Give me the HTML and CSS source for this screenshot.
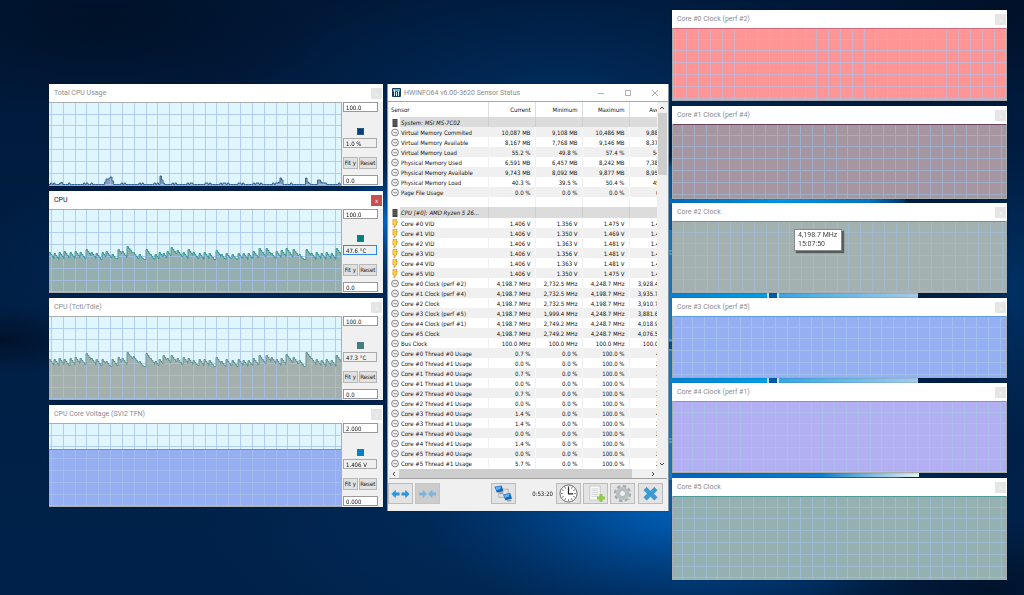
FILE: index.html
```html
<!DOCTYPE html>
<html lang="en">
<head>
<meta charset="utf-8">
<title>Sensor Status</title>
<link rel="stylesheet" href="styles.css">
</head>
<body>
<svg class="wallpaper" viewBox="0 0 1024 595" preserveAspectRatio="none" aria-hidden="true">
  <defs>
    <linearGradient id="base" x1="0" y1="0" x2="0" y2="1">
      <stop offset="0" stop-color="#001838"/><stop offset=".5" stop-color="#001f45"/><stop offset="1" stop-color="#00224a"/>
    </linearGradient>
    <radialGradient id="glow"><stop offset="0" stop-color="#0068c4"/><stop offset=".35" stop-color="#0052a2" stop-opacity=".85"/><stop offset="1" stop-color="#003a78" stop-opacity="0"/></radialGradient>
    <radialGradient id="haze"><stop offset="0" stop-color="#004080" stop-opacity=".55"/><stop offset="1" stop-color="#003870" stop-opacity="0"/></radialGradient>
    <radialGradient id="dark"><stop offset="0" stop-color="#001026" stop-opacity=".85"/><stop offset="1" stop-color="#001026" stop-opacity="0"/></radialGradient>
    <linearGradient id="pane" x1="0" x2="1"><stop offset="0" stop-color="#0a7fd0"/><stop offset="1" stop-color="#00a0ea"/></linearGradient>
    <linearGradient id="pane2" x1="0" x2="1"><stop offset="0" stop-color="#38a8e4"/><stop offset="1" stop-color="#a6cdea"/></linearGradient>
    <linearGradient id="beam" x1="0" x2="1"><stop offset="0" stop-color="#0068bc"/><stop offset=".5" stop-color="#0098ee"/><stop offset=".85" stop-color="#0078cc"/><stop offset="1" stop-color="#003468"/></linearGradient>
    <linearGradient id="beam2" x1="0" x2="1"><stop offset="0" stop-color="#0064b8"/><stop offset=".6" stop-color="#0b80d4"/><stop offset="1" stop-color="#e8f4f4"/></linearGradient>
    <filter id="soft"><feGaussianBlur stdDeviation="2"/></filter>
  </defs>
  <rect width="1024" height="595" fill="url(#base)"/>
  <ellipse cx="560" cy="110" rx="330" ry="150" fill="url(#haze)"/>
  <ellipse cx="300" cy="260" rx="330" ry="120" fill="url(#haze)"/>
  <ellipse cx="0" cy="340" rx="90" ry="34" fill="url(#dark)"/>
  <ellipse cx="100" cy="20" rx="240" ry="90" fill="url(#dark)"/>
  <ellipse cx="1010" cy="10" rx="220" ry="90" fill="url(#dark)"/>
  <ellipse cx="610" cy="500" rx="420" ry="170" fill="url(#haze)"/>
  <ellipse cx="690" cy="500" rx="270" ry="130" fill="url(#glow)"/>
  <ellipse cx="386" cy="222" rx="60" ry="60" fill="url(#glow)"/>
  <ellipse cx="1015" cy="290" rx="60" ry="150" fill="url(#haze)"/>
  <ellipse cx="990" cy="590" rx="180" ry="70" fill="url(#dark)"/>
  <path d="M600 260 680 150 910 206 600 280z" fill="#005cae" filter="url(#soft)"/>
  <rect x="660" y="198" width="245" height="6" fill="url(#beam)"/>
  <rect x="660" y="230" width="108" height="250" fill="url(#pane)"/>
  <rect x="767" y="290" width="2" height="94" fill="#bfe6f4"/>
  <rect x="769" y="290" width="8" height="94" fill="#005cab"/>
  <rect x="777" y="290" width="2" height="94" fill="#c9ecf8"/>
  <rect x="779" y="290" width="139" height="94" fill="url(#pane2)"/>
  <path d="M660 251h14M660 254h14M660 340h14M660 350h14M660 439h14M660 442h14" stroke="#6cc8ee"/>
  <rect x="660" y="342" width="14" height="7" fill="#00509c"/>
  <path d="M672 480V476H918L875 480z" fill="#0a70c6"/>
  <rect x="672" y="473" width="247" height="4" fill="url(#beam2)"/>
</svg>

<main class="desktop" id="desktop">
  <section class="window sensors" aria-label="Sensor Status">
    <header class="titlebar main-title">
      <svg class="app-icon" viewBox="0 0 9 9"><rect width="9" height="9" rx="1" fill="#183c56"/><path d="M1 1h7v2.500H1z" fill="#5db8e4"/><path d="M2.500 2v6M4.500 4v4M6.500 3v5" stroke="#d6eef8"/></svg>
      <h1 class="title">HWiNFO64 v6.00-3620 Sensor Status</h1>
      <div class="caption-buttons">
        <button aria-label="Minimize"><svg viewBox="0 0 8 8"><path d="M1 4.500h6"/></svg></button>
        <button aria-label="Maximize"><svg viewBox="0 0 8 8"><path d="M1.500 1.500h5v5h-5z"/></svg></button>
        <button aria-label="Close"><svg viewBox="0 0 8 8"><path d="m1 1 6 6M7 1 1 7"/></svg></button>
      </div>
    </header>
    <div class="list">
      <div class="table-clip">
        <table class="readings">
          <colgroup><col class="c-name"><col class="c-num"><col class="c-num"><col class="c-num"><col class="c-avg"></colgroup>
          <thead><tr><th scope="col">Sensor</th><th scope="col">Current</th><th scope="col">Minimum</th><th scope="col">Maximum</th><th scope="col">Average</th></tr></thead>
          <tbody id="rows"></tbody>
        </table>
      </div>
      <div class="vscroll">
        <svg viewBox="0 0 6 4"><path d="m1 3 2-2 2 2"/></svg>
        <div class="vthumb"></div>
        <svg viewBox="0 0 6 4"><path d="m1 1 2 2 2-2"/></svg>
      </div>
    </div>
    <div class="hscroll">
      <svg viewBox="0 0 4 6"><path d="M3 1 1 3l2 2"/></svg>
      <div class="hthumb"></div>
      <svg viewBox="0 0 4 6"><path d="m1 1 2 2-2 2"/></svg>
    </div>
    <footer class="toolbar">
      <button class="tool" aria-label="Expand columns"><svg viewBox="0 0 24 20"><path d="m2.500 10.500 4.500-4.500v3h4v3H7v3z" fill="#2e93e2"/><path d="m21.500 10.500-4.500-4.500v3h-4v3h4v3z" fill="#2e93e2"/></svg></button>
      <button class="tool pressed" aria-label="Shrink columns"><svg viewBox="0 0 24 20"><path d="m11.500 10.500-4.500-4.500v3H3v3h4v3zM12.500 10.500l4.500-4.500v3H21v3h-4v3z" fill="#7db4dc"/></svg></button>
      <button class="tool network" aria-label="Remote monitoring"><svg viewBox="0 0 24 20"><path d="M11 5.500h6V10M7 9v5h6" fill="none" stroke="#a2a2a2" stroke-width=".8"/><path d="m2.500 3 7.500-1.500 2 6L5 9z" fill="#1267bd"/><path d="m3.500 3.500 6-1.200-1 3.200-4 1z" fill="#62b5f2"/><path d="m7 9 4-.8 1.500 1.800-4 1z" fill="#9aa2a8"/><path d="m11.500 11 7.500-1.500 2 6-7 1.500z" fill="#1267bd"/><path d="m12.500 11.500 6-1.200-1 3.200-4 1z" fill="#62b5f2"/><path d="m15 17 4-.8 2 1.600-4.500 1z" fill="#9aa2a8"/></svg></button>
      <time class="elapsed">0:53:20</time>
      <button class="tool" aria-label="Reset clock"><svg viewBox="0 0 24 20"><circle cx="12" cy="10" r="9" fill="#fff" stroke="#676767"/><path d="M12 2v2M12 16v2M4 10h2M18 10h2M8 3l1 2M16 3l-1 2M8 17l1-2M16 17l-1-2M5 6l2 1M19 6l-2 1M5 14l2-1M19 14l-2-1" stroke="#555" stroke-width=".8"/><path d="M12 3.500V10.500h5" fill="none" stroke="#222" stroke-width="1.300"/></svg></button>
      <button class="tool" aria-label="Start logging"><svg viewBox="0 0 24 20"><path d="M6 2h11v15H6z" fill="#f8f8f8" stroke="#c8c8c8"/><path d="M8 5h7M8 7h7M8 9h7M8 11h7M8 13h7" stroke="#ccc" stroke-width=".8"/><path d="M16.500 11h2.500v2.500h2.500V16H19v2.500h-2.500V16H14v-2.500h2.500z" fill="#93cf48" stroke="#78b52f" stroke-width=".5"/></svg></button>
      <button class="tool" aria-label="Settings"><svg viewBox="0 0 24 20"><circle cx="12" cy="10" r="7.800" fill="none" stroke="#a2a9ad" stroke-width="2.500" stroke-dasharray="3.600 2.530"/><circle cx="12" cy="10" r="5.200" fill="none" stroke="#b9c0c4" stroke-width="3.500"/><circle cx="12" cy="10" r="3.300" fill="#ededed" stroke="#8b9295" stroke-width=".7"/><path d="m17 14 3 3" stroke="#bfd7bf" stroke-width="2"/></svg></button>
      <button class="tool last" aria-label="Close sensors"><svg viewBox="0 0 24 20"><path d="m8 3.500 4 4 4-4 3 3-3.700 3.700L19 14l-3 3-4-4-4 4-3-3 3.700-3.800L5 6.500z" fill="#389bda" stroke="#2481bb" stroke-width=".5"/></svg></button>
    </footer>
  </section>
  <div class="tooltip" role="tooltip">4,198.7 MHz<br>15:07:50</div>
</main>
<script src="app.js"></script>
</body>
</html>
```

FILE: styles.css
```css
* { box-sizing: border-box; }
body { margin: 0; min-height: 100vh; background: #001c3e; font-family: "DejaVu Sans Condensed", "DejaVu Sans", sans-serif; font-size: 6px; color: #111; overflow: hidden; }
.wallpaper { position: fixed; inset: 0; width: 100%; height: 100%; }
.desktop { position: relative; min-height: 595px; }
button, input { font: inherit; color: inherit; padding: 0; margin: 0; border-radius: 0; }

.window { position: absolute; display: flex; flex-direction: column; background: #fff; box-shadow: 0 0 2px rgba(0, 8, 24, .25); }
.titlebar { display: flex; align-items: center; flex: none; height: 18px; padding-left: 5px; background: #fff; }
.title { flex: 1; margin: 0; font: 400 7px/10px Roboto, "Open Sans", sans-serif; color: #8c8c8c; white-space: nowrap; }
.close { width: 11px; height: 11px; margin: 1px 1px 0 0; border: 0; background: #e5e5e5; color: #f5f5f5; font-size: 6px; line-height: 10px; }
.active .title { color: #222; }
.active .close { background: #c75050; color: #fff; }

.w-usage, .w-cpu, .w-tdie, .w-volt { left: 49px; width: 334px; height: 102px; }
.w-usage { top: 84px; }
.w-cpu { top: 191px; }
.w-tdie { top: 298px; }
.w-volt { top: 405px; }
.core { left: 672px; width: 335px; }
.core0 { top: 10px; height: 91px; }
.core1 { top: 106px; height: 93px; }
.core2 { top: 203px; height: 90px; }
.core3 { top: 298px; height: 80px; }
.core4 { top: 383px; height: 90px; }
.core5 { top: 478px; height: 102px; }

.chart-body { display: flex; flex: 1; min-height: 0; background: #f0f0f0; }
.graph { flex: 1; min-width: 0; border: 1px solid #a8adb0; border-left: 0; overflow: hidden; }
.core .graph { border-left: 1px solid #a8adb0; border-top: 0; }
.graph svg { display: block; width: 100%; height: 100%; }
.panel { display: flex; flex-direction: column; width: 41px; padding: 0 5px 1px 1px; }
.field { display: block; width: 35px; height: 10px; padding: 0 2px; border: 1px solid #999; background: #fff; outline: 0; }
.field.value { width: 34px; background: #f0f0f0; border-color: #aaa; }
.active .field.value { border-color: #2c8ae0; }
.swatch { width: 7px; height: 7px; margin: 16px 0 3px 14px; border: 1px solid rgba(90, 110, 120, .5); }
.pair { display: flex; gap: 1px; width: 34px; margin: 9px 0 auto; }
.pair button { flex: 1 0 auto; height: 12px; border: 1px solid #b8b8b8; background: #e1e1e1; line-height: 10px; }

.sensors { left: 387px; top: 84px; width: 282px; height: 427px; padding: 0 1px; background: #f0f0f0; border-left: 1px solid #8494a4; border-right: 1px solid #8494a4; }
.main-title { margin: 0 -1px; padding-left: 4px; border-bottom: 1px solid #a8a8a8; }
.app-icon { width: 9px; height: 9px; margin-right: 3px; }
.caption-buttons { display: flex; gap: 19px; margin-right: 9px; }
.caption-buttons button { width: 8px; height: 8px; border: 0; background: none; }
.caption-buttons svg { display: block; width: 8px; height: 8px; fill: none; stroke: #999; stroke-width: .8; }
.list { display: flex; height: 367px; background: #fff; }
.table-clip { flex: 1; min-width: 0; overflow: hidden; }
.readings { width: 287px; border-collapse: collapse; table-layout: fixed; line-height: 9px; white-space: nowrap; }
.c-name { width: 99px; }
.c-num { width: 47px; }
.c-avg { width: 47px; }
.readings th, .readings td { height: 10px; padding: 0 4px 0 0; text-align: right; font-weight: 400; border-right: 1px solid #f0f0f0; }
.readings thead th { height: 15px; border-color: #dedede; }
.readings th:first-child { text-align: left; padding-left: 2px; }
.readings tbody th { overflow: hidden; }
.readings .odd td { background: #f0f0f0; border-color: #f8f8f8; }
.readings .odd th { background: linear-gradient(90deg, #fff 11px, #f0f0f0 11px); }
.readings .group td, .readings .group th { background: #dcdcdc; border-color: #cecece; font-style: italic; }
.readings .group th { background: linear-gradient(90deg, #fff 11px, #dcdcdc 11px); }
.readings .even + .group th { height: 11px; }
.row-label { display: flex; align-items: center; gap: 2px; }
.row-label svg { flex: none; width: 8px; height: 9px; }
.vscroll { display: flex; flex-direction: column; width: 10px; padding: 4px 2px 3px; background: #f0f0f0; }
.vscroll svg { width: 6px; height: 4px; }
.vscroll svg:last-child { margin-top: auto; }
.vthumb { height: 62px; margin: 3px -2px 0 -1px; background: #cdcdcd; }
.vscroll svg, .hscroll svg { fill: none; stroke: #444; }
.hscroll { display: flex; align-items: center; height: 10px; padding: 0 12px 0 3px; border-bottom: 1px solid #a0a0a0; }
.hscroll svg { width: 4px; height: 6px; }
.hthumb { width: 233px; height: 9px; margin: 0 auto 0 3px; background: #cdcdcd; }

.toolbar { display: flex; align-items: center; gap: 2px; margin: 4px 0 0 -1px; padding-right: 4px; }
.tool { flex: none; width: 25px; height: 21px; border: 1px solid #bcbcbc; background: #e3e3e3; }
.tool.pressed { background: #cccccc; border-color: #c4c4c4; }
.tool svg { display: block; width: 23px; height: 19px; }
.tool.network { margin: 0 auto 0 49px; }
.tool.last { margin-left: 1px; }
.elapsed { margin-right: 1px; }
.tooltip { position: absolute; left: 794px; top: 229px; padding: 1px 4px 1px 3px; border: 1px solid #888; background: #fff; box-shadow: 2px 2px 1px rgba(60, 65, 65, .75); font: 7px/9px Roboto, "Open Sans", sans-serif; color: #444; white-space: nowrap; }
```

FILE: app.js
```js
const desktop = document.getElementById('desktop');

// Each peak jumps up, then cools in small steps until the next one.
function sawtooth(peaks, width) {
  let d = '';
  peaks.forEach(([x, y], i) => {
    const end = i + 1 < peaks.length ? peaks[i + 1][0] : width;
    let level = y;
    for (let px = x; px < end; px += 1.5) {
      d += (d ? 'V' + (level + 0.5) : 'M0 ' + (level + 0.5)) + 'H' + Math.min(px + 1.5, end);
      level = Math.min(level + 2, 48 + i % 2);
    }
  });
  return d;
}

function bumps(points, width) {
  let d = 'M0 81.500';
  const table = new Map(points);
  for (let x = 0; x < width; x += 1.5) {
    const key = Math.floor(x);
    const noise = Math.sin(key * 1.7) + Math.sin(key * 0.37) > 0.9 ? 80 : 81.5;
    d += 'V' + (table.get(key) || noise) + 'H' + (x + 1.5);
  }
  return d;
}

function grid(width, height, first) {
  let d = '';
  for (let x = first; x < width; x += 11.82) d += `M${Math.floor(x) + 0.5} 0V${height}`;
  for (let y = 11; y < height; y += 11.82) d += `M0 ${Math.floor(y) + 0.5}H${width}`;
  return d;
}

const cpuX = [0,5,10,15,21,26,31,37,42,47,53,57,63,69,73,78,84,90,97,101,106,110,114,118,122,128,134,139,144,150,155,160,167,172,177,183,189,194,199,204,210,217,222,227,232,237,244,250,257,262,267,272,277,282,287];
const cpuY = [42,43,42,41,42,41,42,39,42,43,42,41,44,39,41,36,42,44,39,44,44,42,43,41,37,40,42,39,42,43,42,43,40,44,43,44,43,43,43,41,38,38,43,41,40,38,39,44,39,43,42,43,42,43,38];
const tdieY = [42,42,41,42,41,40,41,36,41,42,42,44,42,40,41,35,39,44,36,41,44,42,38,41,38,41,40,41,43,42,42,43,40,44,42,43,42,43,43,41,38,38,40,42,41,37,40,43,35,41,42,43,42,43,38];
const load = [[10,80],[12,79.500],[55,79],[57,76],[58,76],[60,75],[61,74],[63,78],[111,73],[112,77],[114,80],[228,80],[229,79],[230,75],[231,75],[232,77],[256,75],[258,79],[268,77],[270,77],[271,79],[273,80],[276,80]];

const charts = [
  { cls: 'w-usage', name: 'Total CPU Usage', max: '100.0', min: '0.0', value: '1.0 %', line: '#336a9c', fill: '#8c9fb4', swatch: '#003f82', path: bumps(load, 292) },
  { cls: 'w-cpu active', name: 'CPU', max: '100.0', min: '0.0', value: '47.6 °C', line: '#3c9b98', fill: '#94afae', swatch: '#00807f', path: sawtooth(cpuX.map((x, i) => [x, cpuY[i]]), 292) },
  { cls: 'w-tdie', name: 'CPU (Tctl/Tdie)', max: '100.0', min: '0.0', value: '47.3 °C', line: '#629795', fill: '#a3b0ae', swatch: '#408080', path: sawtooth(cpuX.map((x, i) => [x, tdieY[i]]), 292) },
  { cls: 'w-volt', name: 'CPU Core Voltage (SVI2 TFN)', max: '2.000', min: '0.000', value: '1.406 V', line: '#4f9ce0', fill: '#96aff2', swatch: '#0080c0', path: 'M0 25.500H292' },
  { cls: 'core core0', name: 'Core #0 Clock (perf #2)', h: 72, first: 2, line: '#d46a7e', fill: '#ff9595', grid: '#c9b2cd' },
  { cls: 'core core1', name: 'Core #1 Clock (perf #4)', h: 74, first: 9.5, line: '#68405c', fill: '#a596a2', grid: '#a0afc9' },
  { cls: 'core core2', name: 'Core #2 Clock', h: 71, first: 10.5, line: '#6d9490', fill: '#a3b2b0', grid: '#a2b9d0' },
  { cls: 'core core3', name: 'Core #3 Clock (perf #5)', h: 61, first: 8, line: '#5d9ae0', fill: '#96aff2', grid: '#a0bfec' },
  { cls: 'core core4', name: 'Core #4 Clock (perf #1)', h: 71, first: 8, line: '#8f8ec8', fill: '#b2b0f2', grid: '#aabfea' },
  { cls: 'core core5', name: 'Core #5 Clock', h: 83, first: 9.5, line: '#4f9a96', fill: '#94b0b0', grid: '#9dbcd4' }
];

charts.forEach(c => {
  const side = Boolean(c.value);
  const w = side ? 292 : 333;
  const h = side ? 82 : c.h;
  const path = c.path || `M0 .5H${w}`;
  const el = document.createElement('section');
  el.className = 'window ' + c.cls;
  const panel = side ? `
    <div class="panel">
      <input class="field" aria-label="${c.name} maximum" value="${c.max}">
      <div class="swatch" style="background:${c.swatch}"></div>
      <input class="field value" aria-label="${c.name} current" value="${c.value}" readonly>
      <div class="pair"><button>Fit y</button><button>Reset</button></div>
      <input class="field" aria-label="${c.name} minimum" value="${c.min}">
    </div>` : '';
  el.innerHTML = `
    <header class="titlebar"><h2 class="title">${c.name}</h2><button class="close" aria-label="Close ${c.name}">x</button></header>
    <div class="chart-body">
      <div class="graph"><svg viewBox="0 0 ${w} ${h}" preserveAspectRatio="none">
        <rect width="${w}" height="${h}" fill="#dff6fe"/>
        <path d="${path}V${h}H0Z" fill="${c.fill}"/>
        <path d="${grid(w, h, c.first || 2.5)}" stroke="${c.grid || '#a6c0ec'}" stroke-opacity="${side ? 0.75 : 1}" fill="none"/>
        <path d="${path}" fill="none" stroke="${c.line}"/>
      </svg></div>${panel}
    </div>`;
  desktop.insertBefore(el, desktop.querySelector('.tooltip'));
});

const icons = {
  chip: '<svg viewBox="0 0 8 9"><path d="M1.500 1h5v8h-5z" fill="#444"/><path d="M2 2.500h4M2 4.500h4M2 6.500h4" stroke="#777" stroke-width=".6"/></svg>',
  dial: '<svg viewBox="0 0 8 9"><circle cx="4" cy="4.500" r="3.400" fill="#f4f4f4" stroke="#666" stroke-width=".8"/><path d="M2.300 4.200 4 4.800h2" fill="none" stroke="#666" stroke-width=".7"/></svg>',
  bolt: '<svg viewBox="0 0 8 9"><path d="M2 0h4L5 2.500h1.500L5.500 5H6L3 9V5.500H1.800z" fill="#ffd836" stroke="#cf7f38" stroke-width=".6"/></svg>'
};

const rows = [
  ['chip', 'System: MSI MS-7C02'],
  ['dial', 'Virtual Memory Commited', '10,087 MB', '9,108 MB', '10,486 MB', '9,880 MB'],
  ['dial', 'Virtual Memory Available', '8,167 MB', '7,768 MB', '9,146 MB', '8,373 MB'],
  ['dial', 'Virtual Memory Load', '55.2 %', '49.8 %', '57.4 %', '54.1 %'],
  ['dial', 'Physical Memory Used', '6,591 MB', '6,457 MB', '8,242 MB', '7,380 MB'],
  ['dial', 'Physical Memory Available', '9,743 MB', '8,092 MB', '9,877 MB', '8,953 MB'],
  ['dial', 'Physical Memory Load', '40.3 %', '39.5 %', '50.4 %', '45.1 %'],
  ['dial', 'Page File Usage', '0.0 %', '0.0 %', '0.0 %', '0.0 %'],
  [],
  ['chip', 'CPU [#0]: AMD Ryzen 5 26...'],
  ['bolt', 'Core #0 VID', '1.406 V', '1.356 V', '1.475 V', '1.406 V'],
  ['bolt', 'Core #1 VID', '1.406 V', '1.350 V', '1.469 V', '1.406 V'],
  ['bolt', 'Core #2 VID', '1.406 V', '1.363 V', '1.481 V', '1.406 V'],
  ['bolt', 'Core #3 VID', '1.406 V', '1.356 V', '1.481 V', '1.406 V'],
  ['bolt', 'Core #4 VID', '1.406 V', '1.363 V', '1.481 V', '1.406 V'],
  ['bolt', 'Core #5 VID', '1.406 V', '1.350 V', '1.475 V', '1.406 V'],
  ['dial', 'Core #0 Clock (perf #2)', '4,198.7 MHz', '2,732.5 MHz', '4,248.7 MHz', '3,928.4 MHz'],
  ['dial', 'Core #1 Clock (perf #4)', '4,198.7 MHz', '2,732.5 MHz', '4,198.7 MHz', '3,935.7 MHz'],
  ['dial', 'Core #2 Clock', '4,198.7 MHz', '2,732.5 MHz', '4,198.7 MHz', '3,910.7 MHz'],
  ['dial', 'Core #3 Clock (perf #5)', '4,198.7 MHz', '1,999.4 MHz', '4,248.7 MHz', '3,881.6 MHz'],
  ['dial', 'Core #4 Clock (perf #1)', '4,198.7 MHz', '2,749.2 MHz', '4,248.7 MHz', '4,018.9 MHz'],
  ['dial', 'Core #5 Clock', '4,198.7 MHz', '2,749.2 MHz', '4,248.7 MHz', '4,076.5 MHz'],
  ['dial', 'Bus Clock', '100.0 MHz', '100.0 MHz', '100.0 MHz', '100.0 MHz'],
  ...[['0.7', '4'], ['0.0', '2'], ['0.7', '3'], ['0.0', '3'], ['0.7', '3'], ['0.0', '2'], ['1.4', '4'], ['1.4', '2'], ['0.0', '2'], ['1.4', '3'], ['0.0', '2'], ['5.7', '2']]
    .map(([now, avg], i) => ['dial', `Core #${i >> 1} Thread #${i % 2} Usage`, now + ' %', '0.0 %', '100.0 %', avg + '.2 %'])
];

document.getElementById('rows').innerHTML = rows.map((r, i) => {
  const kind = r[0] === 'chip' ? 'group' : i % 2 ? 'odd' : 'even';
  const label = r[0] ? `<div class="row-label">${icons[r[0]]}<span>${r[1]}</span></div>` : '';
  const cells = [2, 3, 4, 5].map(n => `<td>${r[n] || ''}</td>`).join('');
  return `<tr class="${kind}"><th scope="row">${label}</th>${cells}</tr>`;
}).join('');
```
